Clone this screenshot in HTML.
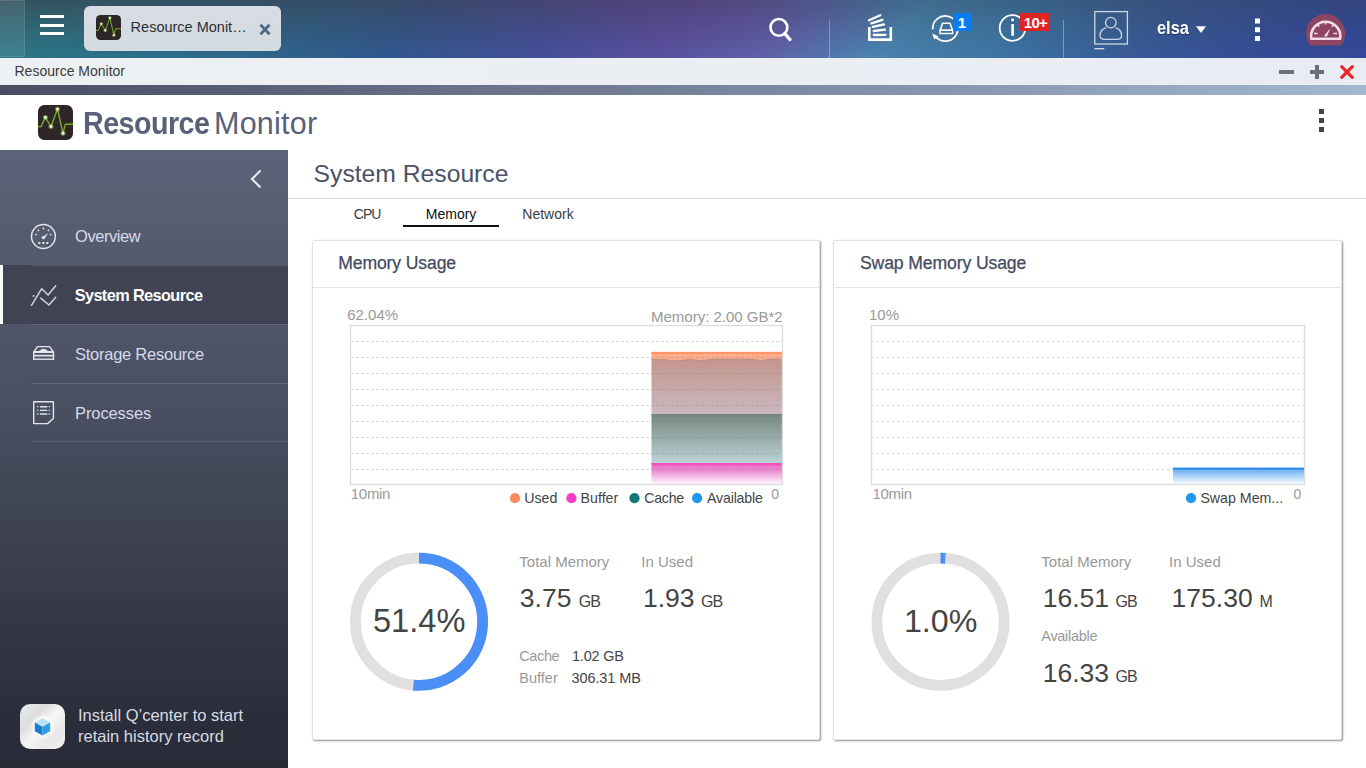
<!DOCTYPE html>
<html><head><meta charset="utf-8">
<style>
*{margin:0;padding:0;box-sizing:border-box}
html,body{width:1366px;height:768px;overflow:hidden;background:#fff;font-family:"Liberation Sans",sans-serif}
.abs{position:absolute}
#topbar{position:absolute;left:0;top:0;width:1366px;height:58px;overflow:hidden;
background:linear-gradient(136.0deg, #2b7888 4.2%, #2e6c8e 18.2%, #30598f 30.9%, #42509a 40.7%, #5850a0 49.1%, #6060aa 57.5%, #4a84b0 65.2%, #3e78a6 72.9%, #395c98 82.7%, #344c98 92.6%, #33489a 100.0%);}
#topbar::before{content:"";position:absolute;left:0;top:0;width:1366px;height:58px;
background:linear-gradient(to right, rgba(55,70,80,.75) 0%, rgba(55,65,85,.7) 25%, rgba(80,60,100,.65) 45%, rgba(75,62,100,.55) 55%, rgba(60,75,105,.5) 60%, rgba(55,88,112,.55) 66%, rgba(50,70,100,.55) 80%, rgba(50,65,105,.55) 100%);
-webkit-mask-image:linear-gradient(to bottom, rgba(0,0,0,1) 0%, rgba(0,0,0,.45) 50%, rgba(0,0,0,0) 100%);}
#titlebar{position:absolute;left:0;top:58px;width:1366px;height:27px;background:linear-gradient(to right,#edf1f3,#e9ecf3)}
#stripe{position:absolute;left:0;top:85px;width:1366px;height:10px;background:linear-gradient(to right,#484d62,#76829a 50%,#a3b7d3)}
#header{position:absolute;left:0;top:95px;width:1366px;height:55px;background:#fff}
#sidebar{position:absolute;left:0;top:150px;width:288px;height:618px;background:linear-gradient(to bottom,#5c6378 0%,#484d5f 45%,#2c2f3c 89%,#282a36 100%)}
.navsep{position:absolute;left:31px;width:257px;height:1px;background:rgba(255,255,255,.12)}
.card{position:absolute;top:240px;height:500px;background:#fff;border:1px solid #e2e2e2;border-radius:2px;box-shadow:1px 1px 2px rgba(0,0,0,.45)}
.t{position:absolute;white-space:nowrap;line-height:1}

</style></head><body>
<div id="topbar"></div>
<div class="abs" style="left:0;top:0;width:25px;height:57px;background:rgba(255,255,255,.09);border:1px solid rgba(255,255,255,.1);border-left:none"></div>
<div class="abs" style="left:40px;top:15px;width:24px;height:3px;background:#fff"></div>
<div class="abs" style="left:40px;top:23.5px;width:24px;height:3px;background:#fff"></div>
<div class="abs" style="left:40px;top:32px;width:24px;height:3px;background:#fff"></div>
<div class="abs" style="left:84px;top:6px;width:197px;height:45px;border-radius:6px;background:linear-gradient(#d7dde3,#d3dae0)"></div>
<svg class="abs" style="left:96px;top:15px" width="25" height="25" viewBox="0 0 35 35"><defs><clipPath id="c25"><rect width="35" height="35" rx="6.5"/></clipPath></defs><rect width="35" height="35" rx="6.5" fill="#2a2424"/><g clip-path="url(#c25)"><path d="M2.5 0 V35 M0 2.5 H35" stroke="#3a3131" stroke-width=".4"/><path d="M5.0 0 V35 M0 5.0 H35" stroke="#3a3131" stroke-width=".4"/><path d="M7.5 0 V35 M0 7.5 H35" stroke="#3a3131" stroke-width=".4"/><path d="M10.0 0 V35 M0 10.0 H35" stroke="#3a3131" stroke-width=".4"/><path d="M12.5 0 V35 M0 12.5 H35" stroke="#3a3131" stroke-width=".4"/><path d="M15.0 0 V35 M0 15.0 H35" stroke="#3a3131" stroke-width=".4"/><path d="M17.5 0 V35 M0 17.5 H35" stroke="#3a3131" stroke-width=".4"/><path d="M20.0 0 V35 M0 20.0 H35" stroke="#3a3131" stroke-width=".4"/><path d="M22.5 0 V35 M0 22.5 H35" stroke="#3a3131" stroke-width=".4"/><path d="M25.0 0 V35 M0 25.0 H35" stroke="#3a3131" stroke-width=".4"/><path d="M27.5 0 V35 M0 27.5 H35" stroke="#3a3131" stroke-width=".4"/><path d="M30.0 0 V35 M0 30.0 H35" stroke="#3a3131" stroke-width=".4"/><path d="M32.5 0 V35 M0 32.5 H35" stroke="#3a3131" stroke-width=".4"/><path d="M0.00 21.60 L3.10 21.60 L7.40 12.30 L13.00 21.60 L19.50 4.00 L25.00 28.30 L27.30 19.30 L35.00 19.30" fill="none" stroke="#76a82a" stroke-width="1.4" stroke-linejoin="round"/><circle cx="7.4" cy="12.3" r="2.6" fill="#c8ee90" opacity=".35"/><circle cx="7.4" cy="12.3" r="1.5" fill="#eaf8d2"/><circle cx="13" cy="21.6" r="2.6" fill="#c8ee90" opacity=".35"/><circle cx="13" cy="21.6" r="1.5" fill="#eaf8d2"/><circle cx="19.5" cy="4" r="2.6" fill="#c8ee90" opacity=".35"/><circle cx="19.5" cy="4" r="1.5" fill="#eaf8d2"/><circle cx="25" cy="28.3" r="2.6" fill="#c8ee90" opacity=".35"/><circle cx="25" cy="28.3" r="1.5" fill="#eaf8d2"/></g></svg>
<div class="t" style="left:130.6px;top:19.9px;font-size:14.5px;color:#2b2f33;">Resource Monit…</div>
<svg class="abs" style="left:258px;top:23px" width="14" height="13" viewBox="0 0 14 13"><path d="M2.5 1.8 L11.5 11.2 M11.5 1.8 L2.5 11.2" stroke="#4b6a86" stroke-width="2.8" stroke-linecap="butt"/></svg>
<svg class="abs" style="left:0;top:0" width="1366" height="58" viewBox="0 0 1366 58">
<!-- search -->
<circle cx="778.9" cy="27.4" r="8.4" fill="none" stroke="#fff" stroke-width="2.6"/>
<path d="M784.6 33.4 L790 39.6" stroke="#fff" stroke-width="3.2" stroke-linecap="round"/>
<!-- separators -->
<rect x="829" y="20" width="1" height="38" fill="rgba(215,220,235,.42)"/>
<rect x="1063" y="20" width="1" height="38" fill="rgba(215,220,235,.42)"/>
<!-- stack icon -->
<path d="M869.3 27 V39.6 H890.8 V27" fill="none" stroke="#fff" stroke-width="2.6"/>
<path d="M869 20.2 L880.3 15.3 M871.4 23.3 L882.4 19.9 M872.8 26.9 L884 24.4 M873.8 31 L885 29.7 M873.8 35 L885.5 34.8" stroke="#fff" stroke-width="2.3" stroke-linecap="round"/>
<!-- sync icon -->
<path d="M932.73 29.38 A12.6 12.6 0 1 1 935.65 36.60" fill="none" stroke="#fff" stroke-width="1.8"/>
<path d="M932.3 33.6 L938.3 36.2 L934.2 39.6 Z" fill="#fff"/>
<path d="M942.6 23.2 H950 L952.5 30.3 H940.1 Z" fill="none" stroke="#fff" stroke-width="1.5" stroke-linejoin="round"/>
<rect x="940" y="30.3" width="12.6" height="3.2" fill="none" stroke="#fff" stroke-width="1.4"/>
<rect x="953" y="13" width="18" height="18" fill="#0a7cf4"/>
<text x="962" y="27.8" font-family="Liberation Sans" font-weight="bold" font-size="15" fill="#fff" text-anchor="middle">1</text>
<!-- info icon -->
<circle cx="1012.5" cy="28" r="12.8" fill="none" stroke="#fff" stroke-width="1.8"/>
<rect x="1011.3" y="18.6" width="2.6" height="2.6" fill="#fff"/>
<rect x="1011.3" y="24" width="2.6" height="11.8" fill="#fff"/>
<rect x="1020" y="13" width="30" height="18" fill="#e02424"/>
<text x="1035.5" y="27.6" font-family="Liberation Sans" font-weight="bold" font-size="15" fill="#fff" text-anchor="middle" letter-spacing="-0.7">10+</text>
<!-- user -->
<rect x="1094.8" y="11.6" width="32.6" height="32.4" fill="none" stroke="rgba(220,228,238,.9)" stroke-width="1.3"/>
<circle cx="1110.8" cy="22.6" r="5.3" fill="none" stroke="rgba(220,228,238,.9)" stroke-width="1.3"/>
<path d="M1106 27.6 C1101 29.5 1100 32 1100 35.5 C1100 38.5 1102 39.4 1105 39.4 H1116.8 C1119.8 39.4 1121.6 38.5 1121.6 35.5 C1121.6 32 1120.6 29.5 1115.6 27.6" fill="none" stroke="rgba(220,228,238,.9)" stroke-width="1.3"/>
<rect x="1094.3" y="48" width="10" height="1.4" fill="rgba(220,228,238,.9)"/>
<!-- triangle -->
<path d="M1196 26.3 H1206 L1201 33 Z" fill="#fff"/>
<!-- dots -->
<rect x="1255" y="18.5" width="5" height="5" fill="#fff"/>
<rect x="1255" y="27.2" width="5" height="5" fill="#fff"/>
<rect x="1255" y="36" width="5" height="5" fill="#fff"/>
<!-- dashboard -->
<defs><clipPath id="dbc"><rect x="1300" y="0" width="60" height="45.6"/></clipPath></defs>
<circle cx="1325.6" cy="33.5" r="19.5" fill="#8d4562" clip-path="url(#dbc)"/>
<path d="M1311.3 38.8 A14.6 14.6 0 1 1 1340.1 38.8 Z" fill="none" stroke="#f2dde6" stroke-width="2.6" stroke-linejoin="round"/>
<path d="M1314 33.5 H1317.5 M1333.5 33.5 H1337 M1325.6 21.5 V24.5 M1317.3 24.8 L1319.3 26.8 M1333.9 24.8 L1331.9 26.8" stroke="#f2dde6" stroke-width="1.5"/>
<path d="M1324 36 L1330.5 28 L1326.8 36.8 Z" fill="#f2dde6"/>
</svg>
<div class="t" style="left:1156.5px;top:19.2px;font-size:18.5px;color:#fff;font-weight:bold;transform:scaleX(0.885);transform-origin:0 0;text-shadow:0 1px 1px rgba(0,0,0,.35);">elsa</div>
<div id="titlebar"></div>
<div class="t" style="left:14.5px;top:64.1px;font-size:14px;color:#3a3a3a;">Resource Monitor</div>
<div class="abs" style="left:1279px;top:70px;width:15px;height:4px;background:#6b7079"></div>
<div class="abs" style="left:1310px;top:70px;width:14px;height:4px;background:#6b7079"></div>
<div class="abs" style="left:1315px;top:65px;width:4px;height:14px;background:#6b7079"></div>
<svg class="abs" style="left:1338px;top:63px" width="18" height="18" viewBox="0 0 18 18"><path d="M3.7 3.7 L14.3 14.3 M14.3 3.7 L3.7 14.3" stroke="#ea2328" stroke-width="3.1" stroke-linecap="round"/></svg>
<div id="stripe"></div>
<div id="header"></div>
<svg class="abs" style="left:38px;top:105px" width="35" height="35" viewBox="0 0 35 35"><defs><clipPath id="c35"><rect width="35" height="35" rx="6.5"/></clipPath></defs><rect width="35" height="35" rx="6.5" fill="#2a2424"/><g clip-path="url(#c35)"><path d="M2.5 0 V35 M0 2.5 H35" stroke="#3a3131" stroke-width=".4"/><path d="M5.0 0 V35 M0 5.0 H35" stroke="#3a3131" stroke-width=".4"/><path d="M7.5 0 V35 M0 7.5 H35" stroke="#3a3131" stroke-width=".4"/><path d="M10.0 0 V35 M0 10.0 H35" stroke="#3a3131" stroke-width=".4"/><path d="M12.5 0 V35 M0 12.5 H35" stroke="#3a3131" stroke-width=".4"/><path d="M15.0 0 V35 M0 15.0 H35" stroke="#3a3131" stroke-width=".4"/><path d="M17.5 0 V35 M0 17.5 H35" stroke="#3a3131" stroke-width=".4"/><path d="M20.0 0 V35 M0 20.0 H35" stroke="#3a3131" stroke-width=".4"/><path d="M22.5 0 V35 M0 22.5 H35" stroke="#3a3131" stroke-width=".4"/><path d="M25.0 0 V35 M0 25.0 H35" stroke="#3a3131" stroke-width=".4"/><path d="M27.5 0 V35 M0 27.5 H35" stroke="#3a3131" stroke-width=".4"/><path d="M30.0 0 V35 M0 30.0 H35" stroke="#3a3131" stroke-width=".4"/><path d="M32.5 0 V35 M0 32.5 H35" stroke="#3a3131" stroke-width=".4"/><path d="M0.00 21.60 L3.10 21.60 L7.40 12.30 L13.00 21.60 L19.50 4.00 L25.00 28.30 L27.30 19.30 L35.00 19.30" fill="none" stroke="#76a82a" stroke-width="1.4" stroke-linejoin="round"/><circle cx="7.4" cy="12.3" r="2.6" fill="#c8ee90" opacity=".35"/><circle cx="7.4" cy="12.3" r="1.5" fill="#eaf8d2"/><circle cx="13" cy="21.6" r="2.6" fill="#c8ee90" opacity=".35"/><circle cx="13" cy="21.6" r="1.5" fill="#eaf8d2"/><circle cx="19.5" cy="4" r="2.6" fill="#c8ee90" opacity=".35"/><circle cx="19.5" cy="4" r="1.5" fill="#eaf8d2"/><circle cx="25" cy="28.3" r="2.6" fill="#c8ee90" opacity=".35"/><circle cx="25" cy="28.3" r="1.5" fill="#eaf8d2"/></g></svg>
<div class="t" style="left:82.6px;top:107.5px;font-size:31.2px;color:#596178;font-weight:bold;letter-spacing:-0.6px;transform:scaleX(0.92);transform-origin:0 0;">Resource</div>
<div class="t" style="left:214.0px;top:108.1px;font-size:30.5px;color:#596178;letter-spacing:0.25px;">Monitor</div>
<div class="abs" style="left:1319px;top:109px;width:5px;height:5px;background:#444"></div>
<div class="abs" style="left:1319px;top:118px;width:5px;height:5px;background:#444"></div>
<div class="abs" style="left:1319px;top:127px;width:5px;height:5px;background:#444"></div>
<div id="sidebar"></div>
<svg class="abs" style="left:246px;top:166px" width="20" height="26" viewBox="0 0 20 26"><path d="M14.5 4.5 L6 13 L14.5 21.5" fill="none" stroke="#e6e8ee" stroke-width="2.2"/></svg>
<div class="abs" style="left:0;top:265px;width:288px;height:59px;background:#3f4354"></div>
<div class="abs" style="left:0;top:265px;width:2.5px;height:59px;background:#fff"></div>
<div class="navsep" style="top:265px"></div>
<div class="navsep" style="top:324px"></div>
<div class="navsep" style="top:383px"></div>
<div class="navsep" style="top:441px"></div>
<svg class="abs" style="left:0;top:150px" width="288" height="300" viewBox="0 150 288 300">
<!-- overview gauge -->
<circle cx="43.4" cy="236.5" r="11.9" fill="none" stroke="#e3e5ea" stroke-width="1.5"/>
<path d="M43.4 227.5 V229.5 M37.8 229.6 L38.9 231 M49 229.6 L47.9 231 M35.3 234.4 L37 234.8 M51.5 234.4 L49.8 234.8" stroke="#d8dbe2" stroke-width="1.5"/>
<path d="M42 237.6 L48.3 233 L44.3 239 Z" fill="#e3e5ea"/>
<circle cx="43.3" cy="237.6" r="1.6" fill="#e3e5ea"/>
<rect x="38.3" y="242" width="2" height="2" fill="#e3e5ea"/>
<rect x="42.3" y="242" width="2" height="2" fill="#e3e5ea"/>
<rect x="46.3" y="242" width="2" height="2" fill="#e3e5ea"/>
<!-- system resource line icon -->
<path d="M31.5 305.3 L41.7 288.7 L48.1 295 L55.7 285.8" fill="none" stroke="#d0d3da" stroke-width="1.5" stroke-linecap="round" stroke-linejoin="round"/>
<path d="M40.7 298.2 L49 305 L55.7 297.3" fill="none" stroke="#d0d3da" stroke-width="1.5" stroke-linecap="round" stroke-linejoin="round"/>
<circle cx="33.6" cy="296" r="1" fill="#d0d3da"/>
<!-- storage icon -->
<path d="M33.8 351.8 L37.5 346.6 H49.6 L53.3 351.8 Z" fill="none" stroke="#e3e5ea" stroke-width="1.4" stroke-linejoin="round"/>
<path d="M38.5 351.5 Q43.5 346.2 48.5 351.5 Z" fill="#e3e5ea"/>
<rect x="33.7" y="352.3" width="19.8" height="3.3" fill="none" stroke="#e3e5ea" stroke-width="1.4"/>
<rect x="33.7" y="355.6" width="19.8" height="3.6" fill="none" stroke="#e3e5ea" stroke-width="1.4"/>
<!-- processes doc -->
<path d="M33.7 401.8 H53.4 V418.5 L47.6 423.6 H33.7 Z" fill="none" stroke="#e3e5ea" stroke-width="1.4" stroke-linejoin="round"/>
<path d="M40 406.7 H47.3 M40 410.4 H47.3 M40 414 H47.3" stroke="#e3e5ea" stroke-width="1.4"/>
<path d="M37 406.7 H38.5 M37 410.4 H38.5 M37 414 H38.5 M48.6 406.7 H50 M48.6 410.4 H50 M48.6 414 H50" stroke="#c9ccd4" stroke-width="1.3"/>
</svg>
<div class="t" style="left:75.0px;top:228.0px;font-size:16.5px;color:#d6daea;letter-spacing:-0.45px;">Overview</div>
<div class="t" style="left:74.7px;top:287.1px;font-size:16.3px;color:#fff;font-weight:bold;letter-spacing:-0.6px;">System Resource</div>
<div class="t" style="left:75.0px;top:346.0px;font-size:16.5px;color:#d6daea;letter-spacing:-0.25px;">Storage Resource</div>
<div class="t" style="left:75.0px;top:405.0px;font-size:16.5px;color:#d6daea;letter-spacing:-0.1px;">Processes</div>
<svg class="abs" style="left:20px;top:704px" width="45" height="45" viewBox="0 0 45 45">
<defs>
<linearGradient id="qbg" x1="0" y1="0" x2="1" y2="1">
<stop offset="0" stop-color="#eceeef"/><stop offset=".3" stop-color="#dcdcdc"/><stop offset=".5" stop-color="#f6f6f6"/><stop offset=".75" stop-color="#e9e7e7"/><stop offset="1" stop-color="#f3f3f3"/>
</linearGradient>
<filter id="qblur" x="-50%" y="-50%" width="200%" height="200%"><feGaussianBlur stdDeviation="1.6"/></filter>
</defs>
<rect width="45" height="45" rx="10" fill="url(#qbg)"/>
<path d="M22.5 11.5 L32 16.8 V28 L22.5 33.5 L13 28 V16.8 Z" fill="#fff" opacity=".85" filter="url(#qblur)"/>
<path d="M22.5 14.3 L30.2 18.5 L22.5 22.7 L14.8 18.5 Z" fill="#b9e3f5"/>
<path d="M14.8 18.5 L22.5 22.7 V31.6 L14.8 27.3 Z" fill="#1d7ccc"/>
<path d="M30.2 18.5 L22.5 22.7 V31.6 L30.2 27.3 Z" fill="#2a9ee6"/>
</svg>
<div class="t" style="left:78.0px;top:707.0px;font-size:16.5px;color:#d7dbe3;">Install Q’center to start</div>
<div class="t" style="left:78.0px;top:727.7px;font-size:16.5px;color:#d7dbe3;">retain history record</div>
<div class="t" style="left:313.6px;top:162.0px;font-size:24.7px;color:#4a5268;">System Resource</div>
<div class="abs" style="left:288px;top:197.6px;width:1078px;height:1px;background:#dcdcdc"></div>
<div class="t" style="left:353.8px;top:207.3px;font-size:14px;color:#3c3c3c;letter-spacing:-1px;">CPU</div>
<div class="t" style="left:425.8px;top:207.3px;font-size:14px;color:#111;">Memory</div>
<div class="t" style="left:522.3px;top:207.3px;font-size:14px;color:#3c3c3c;">Network</div>
<div class="abs" style="left:403px;top:224.8px;width:96px;height:2.2px;background:#111"></div>
<div class="card" style="left:312px;width:508px"></div>
<div class="card" style="left:833px;width:509px"></div>
<div class="abs" style="left:313px;top:287px;width:506px;height:1px;background:#e2e4e8"></div>
<div class="abs" style="left:834px;top:287px;width:507px;height:1px;background:#e2e4e8"></div>
<div class="t" style="left:338.2px;top:254.5px;font-size:17.6px;color:#434b5f;letter-spacing:-0.12px;-webkit-text-stroke:0.25px #434b5f;">Memory Usage</div>
<div class="t" style="left:860.0px;top:254.8px;font-size:17.6px;color:#434b5f;letter-spacing:-0.12px;-webkit-text-stroke:0.25px #434b5f;">Swap Memory Usage</div>
<svg class="abs" style="left:0;top:0" width="1366" height="768" viewBox="0 0 1366 768">
<defs>
<linearGradient id="gBrown" x1="0" y1="0" x2="0" y2="1"><stop offset="0" stop-color="#c4968c"/><stop offset="1" stop-color="#cbb8c0"/></linearGradient>
<linearGradient id="gTeal" x1="0" y1="0" x2="0" y2="1"><stop offset="0" stop-color="#778880"/><stop offset="1" stop-color="#bad2d6"/></linearGradient>
<linearGradient id="gMag" x1="0" y1="0" x2="0" y2="1"><stop offset="0" stop-color="#f060c4"/><stop offset=".35" stop-color="#ea8cd2"/><stop offset="1" stop-color="#ffffff"/></linearGradient>
<linearGradient id="gBlue" x1="0" y1="0" x2="0" y2="1"><stop offset="0" stop-color="#5aa8f0"/><stop offset="1" stop-color="#ffffff"/></linearGradient>
</defs>
<rect x="651.5" y="359" width="131" height="55" fill="url(#gBrown)"/>
<path d="M651.5 352 H782.5 V359.2 H770 C766 359.2 764 360.6 760 360.3 C756 360 754 359.2 750 359.2 H712 C708 359.2 705 360.8 701 360.6 C697 360.4 694 359.3 690 359.4 C686 359.5 683 360.9 676 360.8 C670 360.7 666 359.2 660 359.3 H651.5 Z" fill="#ffad8a"/>
<path d="M651.5 359.5 H660 C666 359.4 670 360.9 676 361 C683 361.1 686 359.7 690 359.6 C694 359.5 697 360.6 701 360.8 C705 361 708 359.4 712 359.4 H750 C754 359.4 756 360.2 760 360.5 C764 360.8 766 359.4 770 359.4 H782.5" fill="none" stroke="#b8918c" stroke-width="1.2"/>
<rect x="651.5" y="351.8" width="131" height="2.2" fill="#ff9468"/>
<rect x="651.5" y="414" width="131.0" height="49" fill="url(#gTeal)"/>
<rect x="651.5" y="414" width="131.0" height="1.2" fill="#6f8276"/>
<rect x="651.5" y="463" width="131.0" height="22" fill="url(#gMag)"/>
<rect x="651.5" y="463" width="131.0" height="2" fill="#f24fc0"/>
<rect x="1173" y="468" width="131" height="16.5" fill="url(#gBlue)"/>
<rect x="1173" y="467.6" width="131" height="1.8" fill="#1e88f0"/>
<path d="M351 341.5 H782" stroke="rgba(120,120,120,.3)" stroke-width="1" stroke-dasharray="3 2"/>
<path d="M351 357.5 H782" stroke="rgba(120,120,120,.3)" stroke-width="1" stroke-dasharray="3 2"/>
<path d="M351 373.5 H782" stroke="rgba(120,120,120,.3)" stroke-width="1" stroke-dasharray="3 2"/>
<path d="M351 389.5 H782" stroke="rgba(120,120,120,.3)" stroke-width="1" stroke-dasharray="3 2"/>
<path d="M351 405.5 H782" stroke="rgba(120,120,120,.3)" stroke-width="1" stroke-dasharray="3 2"/>
<path d="M351 421.5 H782" stroke="rgba(120,120,120,.3)" stroke-width="1" stroke-dasharray="3 2"/>
<path d="M351 437.5 H782" stroke="rgba(120,120,120,.3)" stroke-width="1" stroke-dasharray="3 2"/>
<path d="M351 453.5 H782" stroke="rgba(120,120,120,.3)" stroke-width="1" stroke-dasharray="3 2"/>
<path d="M351 469.5 H782" stroke="rgba(120,120,120,.3)" stroke-width="1" stroke-dasharray="3 2"/>
<path d="M872 341.5 H1304" stroke="rgba(120,120,120,.3)" stroke-width="1" stroke-dasharray="2 3"/>
<path d="M872 357.5 H1304" stroke="rgba(120,120,120,.3)" stroke-width="1" stroke-dasharray="2 3"/>
<path d="M872 373.5 H1304" stroke="rgba(120,120,120,.3)" stroke-width="1" stroke-dasharray="2 3"/>
<path d="M872 389.5 H1304" stroke="rgba(120,120,120,.3)" stroke-width="1" stroke-dasharray="2 3"/>
<path d="M872 405.5 H1304" stroke="rgba(120,120,120,.3)" stroke-width="1" stroke-dasharray="2 3"/>
<path d="M872 421.5 H1304" stroke="rgba(120,120,120,.3)" stroke-width="1" stroke-dasharray="2 3"/>
<path d="M872 437.5 H1304" stroke="rgba(120,120,120,.3)" stroke-width="1" stroke-dasharray="2 3"/>
<path d="M872 453.5 H1304" stroke="rgba(120,120,120,.3)" stroke-width="1" stroke-dasharray="2 3"/>
<path d="M872 469.5 H1304" stroke="rgba(120,120,120,.3)" stroke-width="1" stroke-dasharray="2 3"/>
<rect x="350.5" y="325.5" width="432" height="159" fill="none" stroke="#dcdcdc" stroke-width="1.3"/>
<rect x="871.5" y="325.5" width="433" height="159" fill="none" stroke="#dcdcdc" stroke-width="1.3"/>
<circle cx="515" cy="498.2" r="5.1" fill="#ff8a5b"/>
<circle cx="571.4" cy="498.2" r="5.1" fill="#ff3ccc"/>
<circle cx="634.5" cy="498.2" r="5.1" fill="#137579"/>
<circle cx="697.1" cy="498.2" r="5.1" fill="#2196f3"/>
<circle cx="1191" cy="498.2" r="5.1" fill="#2196f3"/>
<circle cx="419" cy="621.7" r="63.6" fill="none" stroke="#e0e0e0" stroke-width="10.8"/>
<path d="M419 558.1 A63.6 63.6 0 1 1 413.41 685.05" fill="none" stroke="#4a8ff7" stroke-width="10.8"/>
<circle cx="940.5" cy="621.7" r="63.6" fill="none" stroke="#e0e0e0" stroke-width="10.8"/>
<path d="M940.5 558.1 A63.6 63.6 0 0 1 945.29 558.28" fill="none" stroke="#4a8ff7" stroke-width="10.8"/>
</svg>
<div class="t" style="left:347.2px;top:307.4px;font-size:15px;color:#999;">62.04%</div>
<div class="t" style="left:182.7px;width:600px;text-align:right;top:309.2px;font-size:15px;color:#999;">Memory: 2.00 GB*2</div>
<div class="t" style="left:350.8px;top:486.2px;font-size:15px;color:#999;letter-spacing:-0.3px;">10min</div>
<div class="t" style="left:524.2px;top:490.5px;font-size:14.2px;color:#444;">Used</div>
<div class="t" style="left:580.6px;top:490.5px;font-size:14.2px;color:#444;">Buffer</div>
<div class="t" style="left:644.3px;top:490.5px;font-size:14.2px;color:#444;letter-spacing:-0.3px;">Cache</div>
<div class="t" style="left:707.1px;top:490.5px;font-size:14.2px;color:#444;letter-spacing:-0.2px;">Available</div>
<div class="t" style="left:771.3px;top:486.8px;font-size:14px;color:#999;">0</div>
<div class="t" style="left:869.0px;top:307.2px;font-size:15px;color:#999;">10%</div>
<div class="t" style="left:872.4px;top:486.2px;font-size:15px;color:#999;letter-spacing:-0.3px;">10min</div>
<div class="t" style="left:1200.4px;top:490.6px;font-size:14.2px;color:#444;">Swap Mem...</div>
<div class="t" style="left:1293.5px;top:486.6px;font-size:14px;color:#999;">0</div>
<div class="t" style="left:119.2px;width:600px;text-align:center;top:604.6px;font-size:32.6px;color:#444;">51.4%</div>
<div class="t" style="left:640.6px;width:600px;text-align:center;top:604.9px;font-size:32.2px;color:#444;">1.0%</div>
<div class="t" style="left:519.3px;top:554.1px;font-size:15px;color:#999;">Total Memory</div>
<div class="t" style="left:641.3px;top:554.1px;font-size:15px;color:#999;">In Used</div>
<div class="t" style="left:519.8px;top:585.1px;font-size:26.5px;color:#444;">3.75</div>
<div class="t" style="left:578.7px;top:594.0px;font-size:16px;color:#444;letter-spacing:-1px;">GB</div>
<div class="t" style="left:642.9px;top:585.1px;font-size:26.5px;color:#444;">1.93</div>
<div class="t" style="left:701.0px;top:594.0px;font-size:16px;color:#444;letter-spacing:-1px;">GB</div>
<div class="t" style="left:519.3px;top:648.6px;font-size:14.5px;color:#999;letter-spacing:-0.4px;">Cache</div>
<div class="t" style="left:572.0px;top:648.6px;font-size:14.5px;color:#444;letter-spacing:-0.2px;">1.02 GB</div>
<div class="t" style="left:519.3px;top:670.5px;font-size:14.5px;color:#999;">Buffer</div>
<div class="t" style="left:571.5px;top:670.5px;font-size:14.5px;color:#444;letter-spacing:-0.1px;">306.31 MB</div>
<div class="t" style="left:1041.3px;top:554.1px;font-size:15px;color:#999;">Total Memory</div>
<div class="t" style="left:1169.1px;top:554.1px;font-size:15px;color:#999;">In Used</div>
<div class="t" style="left:1042.7px;top:585.4px;font-size:26.5px;color:#444;">16.51</div>
<div class="t" style="left:1115.6px;top:594.3px;font-size:16px;color:#444;letter-spacing:-1px;">GB</div>
<div class="t" style="left:1171.6px;top:585.4px;font-size:26.5px;color:#444;">175.30</div>
<div class="t" style="left:1259.5px;top:594.3px;font-size:16px;color:#444;">M</div>
<div class="t" style="left:1041.3px;top:629.4px;font-size:14.5px;color:#999;letter-spacing:-0.3px;">Available</div>
<div class="t" style="left:1042.7px;top:659.8px;font-size:26.5px;color:#444;">16.33</div>
<div class="t" style="left:1115.6px;top:668.7px;font-size:16px;color:#444;letter-spacing:-1px;">GB</div>
</body></html>
